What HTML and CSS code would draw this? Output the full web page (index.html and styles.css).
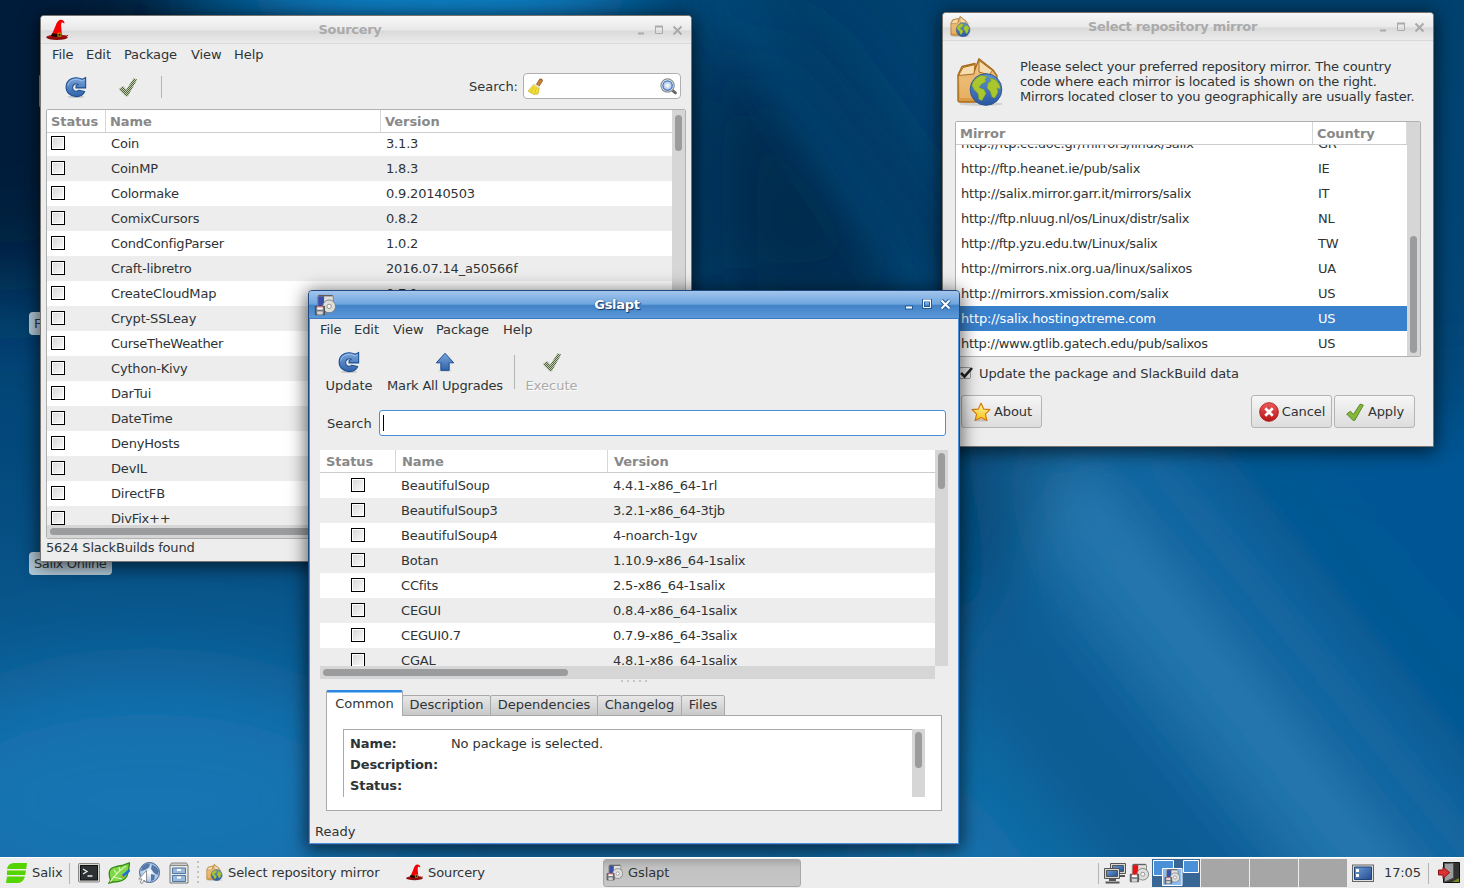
FILE: index.html
```
<!DOCTYPE html>
<html lang="en">
<head>
<meta charset="utf-8">
<title>Salix desktop</title>
<link rel="stylesheet" href="styles.css">
</head>
<body>
<svg class="defs" width="0" height="0" aria-hidden="true">
  <defs>
    <linearGradient id="gBlue" x1="0" y1="0" x2="0" y2="1"><stop offset="0" stop-color="#7ba6dc"/><stop offset="1" stop-color="#2f62a8"/></linearGradient>
    <linearGradient id="gBox" x1="0" y1="0" x2="0" y2="1"><stop offset="0" stop-color="#f3cf98"/><stop offset="1" stop-color="#d8983f"/></linearGradient>
    <linearGradient id="gGlobe" x1="0" y1="0" x2="0" y2="1"><stop offset="0" stop-color="#5d93d6"/><stop offset="1" stop-color="#2a57a0"/></linearGradient>
    <linearGradient id="gStar" x1="0" y1="0" x2="0" y2="1"><stop offset="0" stop-color="#fff9a8"/><stop offset="1" stop-color="#fcc010"/></linearGradient>
    <linearGradient id="gRed" x1="0" y1="0" x2="0" y2="1"><stop offset="0" stop-color="#ee5a5a"/><stop offset="1" stop-color="#b81515"/></linearGradient>
    <linearGradient id="gScreen" x1="0" y1="0" x2="1" y2="1"><stop offset="0" stop-color="#6f9bd6"/><stop offset="1" stop-color="#234d90"/></linearGradient>
    <radialGradient id="gPale"><stop offset="0" stop-color="#fff"/><stop offset="1" stop-color="#9ebde4"/></radialGradient>
    <pattern id="pCheck" width="2.180" height="2.180" patternUnits="userSpaceOnUse"><rect width="2.180" height="2.180" fill="#c3ccb6"/><path d="M0 0h1.090v1.090H0zM1.090 1.090h1.090v1.090H1.090z" fill="#4e6337"/></pattern>
    <symbol id="hat" viewBox="0 0 22 22">
      <ellipse cx="11" cy="18.300" rx="10.800" ry="2.700" fill="#8c0b0b"/><path d="M1 18q10-3 20-1l1-1" stroke="#b81818" fill="none"/>
      <path d="M5 17.500 9.500 7Q11.500 1 14.500.8q4 .2 4 3.700L15.800 3.200l-.8 2.500L16 17.500q-5 1.500-11 0z" fill="#f40000"/>
      <path d="M6 14.300q5 1 9.600 0l.6 3q-5 1.500-11.200 0z" fill="#1c0a00"/><rect x="12" y="14.200" width="3" height="3" fill="none" stroke="#c89a00"/>
    </symbol>
    <symbol id="refresh" viewBox="0 0 24 24">
      <ellipse cx="12" cy="22.800" rx="9" ry="1.200" fill="#000" opacity=".15"/>
      <path d="M22.500 1.500v11.500h-10.500v-2.500l2.500-1.500C11.500 7.500 8.300 9.500 8.300 12.800c0 3.700 4.200 5 6.700 2.700l6.500 1.500C20 20.500 16.500 22.500 12.500 22.500 6 22.500 1.200 18 1.200 12 1.200 3.500 10.500-.5 19 3.500z" fill="url(#gBlue)" stroke="#1f4f93" stroke-width="1.200" stroke-linejoin="round"/>
      <path d="M3 10.500C4.500 3.700 12 2 18.500 5.500l2.500-1.500" fill="none" stroke="#a8c6ec" stroke-width=".9"/>
    </symbol>
    <symbol id="tick" viewBox="0 0 24 24"><path d="M2 14.500 6.500 11l3.500 4L18.200 2.500 22 3.800 11.800 22H9.500z" stroke-linejoin="round"/></symbol>
    <symbol id="up" viewBox="0 0 24 24"><ellipse cx="12" cy="22.500" rx="8" ry="1.200" opacity=".12"/><path d="M12 1.500 22.500 13H17v9H7v-9H1.500z" fill="url(#gBlue)" stroke="#1f4f93" stroke-width="1.200" stroke-linejoin="round"/></symbol>
    <symbol id="box" viewBox="0 0 48 48">
      <ellipse cx="25" cy="46" rx="22" ry="1.800" opacity=".12"/>
      <path d="M2 17 6 8.500 19 5.500 18 14 23 .8 37 12l4 6-1 24q0 2-3 2H4q-2 0-2-2z" fill="url(#gBox)" stroke="#a66a19" stroke-width="1.400" stroke-linejoin="round"/>
      <path d="M2.500 17.500 7 9.500l12-3-1 9.500zM23 2.500l13.500 10L33 17l-10-3z" fill="#f6dcae" stroke="#a66a19"/>
      <path d="M4 20h14v20H4z" fill="#eebe75" opacity=".6"/>
      <circle cx="30" cy="31.500" r="15.800" fill="url(#gGlobe)" stroke="#2d5591"/>
      <path d="M17 24q3-5 8-6.500l6 1-2 3 1 2-5 3-2 3 5 2 2 4-4 7-3-1-1-6-4-4-2-4zM34 20l6 2 4 6 0 3-3-1 1 4-3 6-3-1-2-6-3-3 1-5 3-2z" fill="#a9c72c" stroke="#7c9b22" stroke-width=".6"/>
    </symbol>
    <symbol id="disk" viewBox="0 0 24 24">
      <rect x="4" y="1.500" width="17" height="17" rx="1.500" fill="#e0e0dc" stroke="#777"/><rect x="4.500" y="2.500" width="6.500" height="12" fill="currentColor"/><path d="M5 2h15" stroke="#444"/>
      <circle cx="16.500" cy="13.500" r="7" fill="#dededb" stroke="#777"/><circle cx="16.500" cy="13.500" r="2.400" fill="#f8f8f8" stroke="#888"/>
      <path d="M1.500 13.500h10v9h-10z" fill="#777b82" stroke="#444"/><path d="M3.500 13.500h6v3.500h-6z" fill="#fff"/><path d="M3.500 14h6" stroke="#d33"/><path d="M3.500 19h6v3.500h-6z" fill="#d5d5d5"/>
    </symbol>
  </defs>
</svg>

<main class="desktop">
  <svg class="wallpaper" viewBox="0 0 1464 888" preserveAspectRatio="none" aria-hidden="true">
    <defs>
      <linearGradient id="wBase" x1="0" y1="0" x2="0" y2="1"><stop offset="0" stop-color="#00416f"/><stop offset=".5" stop-color="#03487a"/><stop offset=".8" stop-color="#0c5e96"/><stop offset="1" stop-color="#12649c"/></linearGradient>
      <linearGradient id="wStreak" gradientUnits="userSpaceOnUse" x1="960" y1="888" x2="1464" y2="480">
        <stop offset="0" stop-color="#1474b2"/><stop offset=".17" stop-color="#10689f"/><stop offset=".24" stop-color="#0b5a92"/><stop offset=".36" stop-color="#0a5c96"/><stop offset=".46" stop-color="#1f74ac"/><stop offset=".54" stop-color="#2f7fb6"/><stop offset=".58" stop-color="#0c609a"/><stop offset=".66" stop-color="#156ba6"/><stop offset=".72" stop-color="#075992"/><stop offset="1" stop-color="#005696"/>
      </linearGradient>
      <filter id="b60" filterUnits="userSpaceOnUse" x="-300" y="-300" width="2064" height="1488"><feGaussianBlur stdDeviation="50"/></filter>
      <filter id="b12" filterUnits="userSpaceOnUse" x="-300" y="-300" width="2064" height="1488"><feGaussianBlur stdDeviation="20"/></filter>
    </defs>
    <rect width="1464" height="888" fill="url(#wBase)"/>
    <g filter="url(#b60)">
      <ellipse cx="10" cy="20" rx="170" ry="280" fill="#001c3a"/>
      <ellipse cx="440" cy="-20" rx="200" ry="90" fill="#0880c4"/>
      <path d="M690 60 780 40 940 260 960 330H690z" fill="#002a4e"/>
      <ellipse cx="150" cy="800" rx="240" ry="120" fill="#1574b2"/>
      <path d="M1020 420h550v600H880V720z" fill="url(#wStreak)"/>
      <ellipse cx="985" cy="520" rx="50" ry="90" fill="#00406c"/>
    </g>
    <g filter="url(#b12)">
      <path d="M700-20h35l250 370h-45z" fill="#075085" opacity=".6"/>
    </g>
    <g filter="url(#b12)" opacity=".6">
      <path d="M1100 440h470v500H930V720z" fill="url(#wStreak)"/>
    </g>
  </svg>
  <div class="deskicon" aria-hidden="true"></div>
  <span class="desklabel desklabel-files">Files</span>
  <span class="desklabel desklabel-online">Salix Online</span>

  <section class="window win-mirror">
    <header class="titlebar">
      <svg class="i22"><use href="#box"/></svg><h1>Select repository mirror</h1>
      <svg class="winctl" viewBox="0 0 48 12"><path d="M1 9.500h6" stroke-width="2"/><path d="M18.500 2.500h7v7h-7z" stroke-width="1"/><path d="M18 2.500h8" stroke-width="2"/><path d="m36.500 2.500 8 8m0-8-8 8" stroke-width="2"/></svg>
    </header>
    <div class="intro"><svg class="i48"><use href="#box"/></svg><p>Please select your preferred repository mirror. The country<br>code where each mirror is located is shown on the right.<br>Mirrors located closer to you geographically are usually faster.</p></div>
    <div class="framed mirrors">
      <div class="list">
        <div class="row head"><span>Mirror</span><span>Country</span></div>
        <div class="rows">
          <div class="row"><span>http://ftp.cc.uoc.gr/mirrors/linux/salix</span><span>GR</span></div>
          <div class="row"><span>http://ftp.heanet.ie/pub/salix</span><span>IE</span></div>
          <div class="row"><span>http://salix.mirror.garr.it/mirrors/salix</span><span>IT</span></div>
          <div class="row tight"><span>http://ftp.nluug.nl/os/Linux/distr/salix</span><span>NL</span></div>
          <div class="row tight"><span>http://ftp.yzu.edu.tw/Linux/salix</span><span>TW</span></div>
          <div class="row"><span>http://mirrors.nix.org.ua/linux/salixos</span><span>UA</span></div>
          <div class="row loose"><span>http://mirrors.xmission.com/salix</span><span>US</span></div>
          <div class="row loose selected"><span>http://salix.hostingxtreme.com</span><span>US</span></div>
          <div class="row tight"><span>http://www.gtlib.gatech.edu/pub/salixos</span><span>US</span></div>
        </div>
      </div>
      <div class="vscroll"><i></i></div>
    </div>
    <label class="option"><svg viewBox="0 0 16 16"><rect x="1.500" y="2.500" width="11" height="11" rx="1.500" fill="#eee" stroke="#999"/><path d="m3 8 3.500 3.500L14 3" fill="none" stroke="#222" stroke-width="2.600"/></svg>Update the package and SlackBuild data</label>
    <div class="buttons">
      <button><svg class="i20" viewBox="0 0 24 24"><ellipse cx="12" cy="22" rx="9" ry="1.500" opacity=".15"/><path d="m12 1.500 3.300 7 7.500.7-5.500 5.300 1.700 7.700-7-3.700-7 3.700 1.700-7.700L1.200 9.200l7.500-.7z" fill="url(#gStar)" stroke="#d47a0a" stroke-width="1.400" stroke-linejoin="round"/></svg>About</button>
      <button class="push"><svg class="i20" viewBox="0 0 24 24"><circle cx="12" cy="12" r="11.200" fill="url(#gRed)" stroke="#a11" stroke-width="1"/><path d="m7.500 7.500 9 9m0-9-9 9" stroke="#fff" stroke-width="3.200"/></svg>Cancel</button>
      <button><svg class="i20 tick-on"><use href="#tick"/></svg>Apply</button>
    </div>
  </section>

  <section class="window win-sourcery">
    <header class="titlebar">
      <svg class="i22"><use href="#hat"/></svg><h1>Sourcery</h1>
      <svg class="winctl" viewBox="0 0 48 12"><path d="M1 9.500h6" stroke-width="2"/><path d="M18.500 2.500h7v7h-7z" stroke-width="1"/><path d="M18 2.500h8" stroke-width="2"/><path d="m36.500 2.500 8 8m0-8-8 8" stroke-width="2"/></svg>
    </header>
    <nav class="menubar"><span class="m-file">File</span><span class="m-edit">Edit</span><span class="m-pack">Package</span><span class="m-view">View</span><span>Help</span></nav>
    <div class="tools">
      <svg class="i22"><use href="#refresh"/></svg><svg class="i22 tick-off"><use href="#tick"/></svg><i class="sep"></i>
      <span class="push">Search:</span>
      <div class="searchbox">
        <svg viewBox="0 0 18 18"><path d="m9.500 7.500 4-6.500q3-.5 3 2l-4 6z" fill="#c87f35" stroke="#7a4310" stroke-width=".7"/><path d="M7.500 6.500 13 10l-1.500 7-4 .5L1.200 14z" fill="#f3dd3a" stroke="#c7a90e" stroke-width=".7"/><path d="m8 9-4 6m6-5-2 6" stroke="#c9ad18" stroke-width=".6"/><path d="m7.500 6.500 5.500 3.300" stroke="#e8e4d8" stroke-width="1.700"/></svg>
        <svg viewBox="0 0 18 18"><path d="m13 13 3.300 2.800" stroke="#666" stroke-width="3" stroke-linecap="round"/><circle cx="8" cy="8" r="7" fill="#fff" stroke="#8b8d8f" stroke-width="1.300"/><circle cx="8" cy="8" r="5" fill="url(#gPale)" stroke="#3b73b9" stroke-width="1.300"/></svg>
      </div>
    </div>
    <div class="framed packages">
      <div class="list">
        <div class="row head"><span>Status</span><span>Name</span><span>Version</span></div>
        <div class="rows">
          <div class="row"><i></i><span>Coin</span><span>3.1.3</span></div>
          <div class="row"><i></i><span>CoinMP</span><span>1.8.3</span></div>
          <div class="row"><i></i><span>Colormake</span><span>0.9.20140503</span></div>
          <div class="row"><i></i><span>ComixCursors</span><span>0.8.2</span></div>
          <div class="row"><i></i><span>CondConfigParser</span><span>1.0.2</span></div>
          <div class="row"><i></i><span>Craft-libretro</span><span>2016.07.14_a50566f</span></div>
          <div class="row"><i></i><span>CreateCloudMap</span><span>0.7.1</span></div>
          <div class="row"><i></i><span>Crypt-SSLeay</span><span></span></div>
          <div class="row tight"><i></i><span>CurseTheWeather</span><span></span></div>
          <div class="row"><i></i><span>Cython-Kivy</span><span></span></div>
          <div class="row"><i></i><span>DarTui</span><span></span></div>
          <div class="row"><i></i><span>DateTime</span><span></span></div>
          <div class="row"><i></i><span>DenyHosts</span><span></span></div>
          <div class="row"><i></i><span>DevIL</span><span></span></div>
          <div class="row"><i></i><span>DirectFB</span><span></span></div>
          <div class="row"><i></i><span>DivFix++</span><span></span></div>
        </div>
        <div class="hscroll"><i></i></div>
      </div>
      <div class="vscroll"><i></i></div>
    </div>
    <footer>5624 SlackBuilds found</footer>
  </section>

  <section class="window active win-gslapt">
    <header class="titlebar">
      <svg class="i22 disk-blue"><use href="#disk"/></svg><h1>Gslapt</h1>
      <svg class="winctl" viewBox="0 0 48 12"><g class="ctl-edge"><path d="M0 9.500h8" stroke-width="4"/><path d="M18.500 2.500h7v7h-7z" stroke-width="3"/><path d="m36.500 2.500 8 8m0-8-8 8" stroke-width="4"/></g><path d="M1 9.500h6" stroke-width="2"/><path d="M18.500 2.500h7v7h-7z" stroke-width="1"/><path d="M18 2.500h8" stroke-width="2"/><path d="m36.500 2.500 8 8m0-8-8 8" stroke-width="2"/></svg>
    </header>
    <nav class="menubar"><span class="m-file">File</span><span class="m-edit">Edit</span><span class="m-view">View</span><span class="m-pack">Package</span><span>Help</span></nav>
    <div class="bigtools">
      <div class="tool"><svg class="i22"><use href="#refresh"/></svg><span>Update</span></div>
      <div class="tool tool-mark"><svg class="i20"><use href="#up"/></svg><span>Mark All Upgrades</span></div>
      <i class="sep"></i>
      <div class="tool off"><svg class="i22 tick-off"><use href="#tick"/></svg><span>Execute</span></div>
    </div>
    <div class="query"><span>Search</span><div class="entry"><i></i></div></div>
    <div class="results">
      <div class="list">
        <div class="row head"><span>Status</span><span>Name</span><span>Version</span></div>
        <div class="rows">
          <div class="row"><i></i><span>BeautifulSoup</span><span>4.4.1-x86_64-1rl</span></div>
          <div class="row"><i></i><span>BeautifulSoup3</span><span>3.2.1-x86_64-3tjb</span></div>
          <div class="row"><i></i><span>BeautifulSoup4</span><span>4-noarch-1gv</span></div>
          <div class="row"><i></i><span>Botan</span><span>1.10.9-x86_64-1salix</span></div>
          <div class="row"><i></i><span>CCfits</span><span>2.5-x86_64-1salix</span></div>
          <div class="row"><i></i><span>CEGUI</span><span>0.8.4-x86_64-1salix</span></div>
          <div class="row"><i></i><span>CEGUI0.7</span><span>0.7.9-x86_64-3salix</span></div>
          <div class="row"><i></i><span>CGAL</span><span>4.8.1-x86_64-1salix</span></div>
        </div>
      </div>
      <div class="vscroll"><i></i></div>
      <div class="hscroll"><i></i></div>
    </div>
    <div class="grip"><i></i><i></i><i></i><i></i><i></i></div>
    <div class="tabs"><span class="current">Common</span><span class="t-desc">Description</span><span class="t-deps">Dependencies</span><span class="t-log">Changelog</span><span class="t-files">Files</span></div>
    <div class="page">
      <dl><dt>Name:</dt><dd>No package is selected.</dd><dt>Description:</dt><dd></dd><dt>Status:</dt><dd></dd></dl>
      <div class="vscroll"><i></i></div>
    </div>
    <footer>Ready</footer>
  </section>
</main>

<div class="panel">
  <svg class="logo" viewBox="0 0 21 20"><path d="M1 6Q2 0 8 0h13l-.8 6zM1 7.500h19l-.7 4.500H1zM1 13.500h18Q17 20 12 20H0z" fill="#54d403"/></svg>
  <span class="menu-name">Salix</span><i class="sep"></i>
  <svg class="i22 launch" viewBox="0 0 22 22"><rect x=".5" y="1.500" width="21" height="18.500" rx="1" fill="#d6d6d1" stroke="#888"/><rect x="2.500" y="3.500" width="17" height="14.500" fill="#2c3133" stroke="#111"/><path d="m5 7 4 2.500L5 12M9.500 14h5" fill="none" stroke="#eee" stroke-width="1.300"/></svg>
  <svg class="i22 launch" viewBox="0 0 22 22"><path d="M1 21 2.500 18Q-1 8 5 5.500 10 4 14 3.500 18 2 21.500.8 21 8 19 14q-3 6-14 6z" fill="#7fd64a" stroke="#338a11" stroke-width="1.300"/><path d="M2 20Q9 10 18 4M6 8l3 4m2-7 1 4M5 15l9 2" fill="none" stroke="#d9f7b8" stroke-width="1.200"/><path d="m13 16 1-3 7-6 1.500 2-7 6z" fill="#1e6ee0"/><path d="m13 16 1-3 1.500 2z" fill="#eca52d"/></svg>
  <svg class="i22 launch" viewBox="0 0 22 22"><circle cx="11.500" cy="10.500" r="10" fill="url(#gPale)" stroke="#44648f"/><path d="m4 4.500 4-2.700 4-.3-1 4-4 2.500-4 1zM14 2.500l4.500 2.800L21 9l-1.500 4-3.500-2-3-4zM13 12l4 1-1 5-3 1z" fill="#5478a8"/><path d="M8.500 8.500v12L6 18l-1.800 3.500-2-1L4 17H.8z" fill="#fff" stroke="#777" stroke-width=".8"/></svg>
  <svg class="i22 launch" viewBox="0 0 22 22"><path d="M2 3.500h18v17.500H2z" fill="#e8e8e5" stroke="#777"/><path d="m2 3.500 1.500-2.500h15l1.500 2.500z" fill="#ccc" stroke="#888"/><path d="M4.500 6h13v5.500h-13zM4.500 13.500h13v6h-13z" fill="#9ab8da" stroke="#5378a3"/><path d="M9 8h4M9 15.500h4" stroke="#fff" stroke-width="2"/></svg>
  <i class="dots"></i>
  <div class="task"><svg class="i16"><use href="#box"/></svg>Select repository mirror</div>
  <div class="task task-hat"><svg class="i16"><use href="#hat"/></svg>Sourcery</div>
  <div class="task pressed"><svg class="i16 disk-blue"><use href="#disk"/></svg>Gslapt</div>
  <i class="sep push"></i>
  <svg class="net" viewBox="0 0 22 22"><g stroke="#555"><path d="M6.500 1.500h15v10h-15z" fill="#d8d8d4"/><path d="M8.500 3.500h11v6h-11z" fill="url(#gScreen)"/><path d="M12 14h9" stroke-width="2"/><path d="M.5 6.500h15v10h-15z" fill="#d8d8d4"/><path d="M2.500 8.500h11v6h-11z" fill="url(#gScreen)"/><path d="M5 18h7M1.500 20.500h14" stroke-width="2"/></g></svg>
  <svg class="i20 disk-red"><use href="#disk"/></svg>
  <div class="pager">
    <svg class="here" viewBox="0 0 48 28"><path d="M0 0h48v28H0z" fill="#386695"/><path d="M1.500 1.500h20v15h-20zM31.500 1.500h15v12h-15z" fill="#4a90d9" stroke="#fff"/><path d="M10.500 9.500h19.500v17H10.500z" fill="#8cbcf2" stroke="#fff"/><svg x="12" y="9.500" width="16" height="16" class="disk-blue"><use href="#disk"/></svg></svg>
    <i></i><i></i><i></i>
  </div>
  <svg class="i22 show" viewBox="0 0 22 22"><rect x=".5" y="3" width="21" height="16.500" fill="#e0e0dc" stroke="#666"/><path d="M2.500 5h17v12.500h-17z" fill="url(#gScreen)" stroke="#1f4375"/><path d="M4 7h3v3H4zM4 12h3v3H4z" fill="#fff"/></svg>
  <time>17:05</time><i class="sep"></i>
  <svg class="i22 quit" viewBox="0 0 22 22"><path d="M5.500.5h16v20h-16z" fill="#333" stroke="#111"/><path d="M14 20 21 16v4z" fill="#7a8a20"/><path d="m6.500 1.500 9-.5v15l-9 4z" fill="#aaa" stroke="#555" opacity=".9"/><path d="M.5 8h4.500V5l6.500 5.500L5 16.500v-3.500H.5z" fill="#dd3333" stroke="#8b1010"/></svg>
</div>
</body>
</html>
```
FILE: styles.css
```
* { box-sizing: border-box; }
body { margin: 0; width: 1464px; height: 888px; overflow: hidden; font: 13px/15px "DejaVu Sans", sans-serif; color: #2e3436; background: #03487a; }
.defs { position: absolute; }
svg { display: block; flex: none; }
.desktop { position: relative; height: 857px; overflow: hidden; }
.wallpaper { position: absolute; left: 0; top: 0; width: 1464px; height: 888px; }
.push { margin-left: auto; }
.i16 { width: 17px; height: 17px; }
.i20 { width: 20px; height: 20px; }
.i22 { width: 22px; height: 22px; }
.i48 { width: 48px; height: 48px; }
.disk-blue { color: #3a50a8; }
.disk-red { color: #ee1111; }
.tick-on { fill: #83b83a; stroke: #4a7a14; }
.tick-off { fill: url(#pCheck); stroke: none; }
.sep { flex: none; width: 1px; background: #b4b4b4; }

.deskicon { position: absolute; left: 39px; top: 74px; width: 20px; height: 34px; border-radius: 3px; background: #7890a4; }
.desklabel { position: absolute; left: 29px; width: 83px; height: 23px; padding: 4px 5px; border-radius: 4px; background: #b4cad8; letter-spacing: -.4px; white-space: nowrap; }
.desklabel-files { top: 312px; }
.desklabel-online { top: 552px; }

.window { position: absolute; display: flex; flex-direction: column; border: 1px solid #77736f; border-radius: 4px 4px 0 0; background: #ededed; box-shadow: 0 3px 18px 2px rgba(0, 0, 0, .6); }
.win-mirror { left: 942px; top: 12px; width: 492px; height: 435px; }
.win-sourcery { left: 40px; top: 15px; width: 652px; height: 547px; }
.win-gslapt { left: 308px; top: 290px; width: 652px; height: 555px; border-color: #1e4a80; }
.titlebar { display: flex; align-items: center; flex: none; height: 28px; padding: 0 6px 0 5px; border-radius: 3px 3px 0 0; border-bottom: 1px solid #d9d9d9; background: linear-gradient(#f8f8f8, #e9e9e9 50%, #dadada 56%, #ebebeb); }
.titlebar h1 { flex: 1; margin: 0; padding-right: 5px; text-align: center; font-size: 13px; line-height: 15px; color: #aaa; letter-spacing: -.3px; }
.win-mirror .titlebar h1 { padding-right: 4px; }
.win-mirror .titlebar .i22 { width: 21px; height: 21px; margin: 0 -1px 0 2px; }
.win-gslapt .titlebar h1 { padding-right: 7px; }
.winctl { width: 48px; height: 12px; fill: none; stroke: #aaa; }
.win-gslapt .winctl { margin-top: -1px; }
.menubar { display: flex; flex: none; height: 21px; padding: 3px 11px; }
.menubar span { letter-spacing: -.05px; }
.m-file { width: 34px; }
.m-edit { width: 38px; }
.menubar .m-pack { width: 67px; letter-spacing: -.15px; }
.m-view { width: 43px; }
.win-gslapt .m-edit { width: 39px; }

.framed { display: flex; border: 1px solid #b0b2b2; border-radius: 2px; background: #fff; overflow: hidden; }
.list { display: flex; flex-direction: column; flex: 1; min-width: 0; background: #fff; }
.row { display: grid; align-items: center; flex: none; height: 25px; white-space: nowrap; letter-spacing: -.18px; }
.row i { width: 14px; height: 14px; margin-top: -2px; border: 1px solid #000; background: linear-gradient(135deg, #dcdcdc 15%, #fafafa); box-shadow: inset 0 0 0 1px #fff; }
.head { height: 23px; border-bottom: 1px solid #ccc; font-weight: bold; color: #888; letter-spacing: -.05px; }
.head span { height: 22px; padding-top: 4px; }
.head span + span { border-left: 1px solid #d8d8d8; }
.rows { flex: 1; min-height: 0; display: flex; flex-direction: column; overflow: hidden; }
.vscroll { flex: none; width: 13px; padding: 3px; background: #d6d6d6; }
.hscroll { flex: none; height: 13px; padding: 3px; background: #d6d6d6; }
.vscroll i, .hscroll i { display: block; width: 7px; height: 36px; border-radius: 4px; background: #9b9c9d; }
.hscroll i { width: 245px; height: 7px; }

.intro { display: flex; gap: 16px; height: 80px; margin-left: 13px; padding-top: 17px; }
.intro p { margin: 1px 0 0; letter-spacing: -.175px; white-space: nowrap; }
.mirrors { margin: 0 12px; height: 236px; }
.mirrors .row { grid-template-columns: 357px 1fr; padding-left: 5px; letter-spacing: -.23px; }
.mirrors .tight span:first-child { letter-spacing: -.3px; }
.mirrors .loose span:first-child { letter-spacing: -.18px; }
.mirrors .head { padding-left: 4px; height: 23px; grid-template-columns: 352px 1fr; letter-spacing: -.05px; }
.mirrors .head span + span { padding-left: 4px; border-right: 1px solid #ddd; }
.mirrors .rows { justify-content: flex-end; }
.mirrors .vscroll i { margin-top: 111px; height: 117px; }
.selected { color: #fff; }
.option { display: flex; align-items: center; gap: 5px; height: 32px; margin-left: 15px; letter-spacing: -.13px; }
.option svg { width: 16px; height: 16px; }
.buttons { display: flex; gap: 2px; margin: 6px 18px 0; }
.buttons button { display: flex; align-items: center; justify-content: center; gap: 3px; width: 81px; height: 33px; padding: 0; border: 1px solid #b4b4b4; border-radius: 3px; background: linear-gradient(#f6f6f6, #ddd); color: inherit; font: inherit; letter-spacing: -.1px; }
.buttons .push { padding-left: 1px; }

.tools { display: flex; align-items: center; height: 44px; padding: 0 10px 1px 24px; }
.tools .tick-off { margin-left: 30px; width: 22px; }
.tools .sep { height: 22px; margin-left: 22px; }
.searchbox { display: flex; align-items: center; justify-content: space-between; width: 158px; height: 26px; margin-left: 5px; padding: 0 3px; border: 1px solid #b0b0b0; border-radius: 4px; background: #fff; }
.searchbox svg { width: 17px; height: 17px; }
.tools .push, .searchbox { margin-top: -1px; }
.packages { height: 430px; margin: 0 5px; }
.packages .row { grid-template-columns: 60px 275px 1fr; padding-left: 4px; }
.packages .tight { letter-spacing: -.28px; }
.packages .head { grid-template-columns: 54px 275px 1fr; }
.packages .head span + span { padding-left: 4px; }
.rows .row:nth-child(even) { background: #ededed; }
.mirrors .rows .row { background: #fff; }
.mirrors .rows .selected { background: #3981cc; }
.packages .rows .row:first-child { margin-top: -2px; }
.packages .vscroll { padding-top: 5px; }
.packages .hscroll i { width: 600px; }
.win-sourcery footer { padding: 1px 5px; letter-spacing: -.18px; }

.active { background: #ededed; box-shadow: inset 0 0 0 1px #4a90d9, 0 3px 18px 2px rgba(0, 0, 0, .6); }
.active .titlebar { border-bottom-color: #3a7bc4; background: linear-gradient(#a3c5ec, #6fa6df 48%, #4282c6 54%, #5b98d9); }
.active h1 { color: #fff; text-shadow: 0 0 1px #173c66, 1px 1px 1px #173c66; }
.active .winctl { stroke: #fff; }
.ctl-edge { stroke: #245c9a; }
.bigtools { display: flex; flex: none; height: 70px; padding: 11px 17px; }
.tool { display: flex; flex-direction: column; align-items: center; white-space: nowrap; width: 46px; }
.tool svg { height: 22px; }
.tool span { margin-top: 5px; }
.tool-mark { width: 116px; margin-left: 15px; letter-spacing: -.17px; }
.bigtools .sep { height: 34px; margin: 4px 11px 0 11px; }
.off { width: 51px; color: #aaa; text-shadow: 1px 1px #fff; }
.query { display: flex; flex: none; align-items: center; justify-content: space-between; height: 26px; margin: 0 13px 14px 18px; }
.entry { display: flex; align-items: center; width: 567px; height: 26px; border: 1px solid #4a90d9; border-radius: 3px; background: #fff; padding-left: 3px; }
.entry i { width: 1px; height: 16px; background: #000; }
.results { display: grid; flex: none; grid-template-columns: 615px 13px; grid-template-rows: 216px 13px; margin-left: 11px; }
.results .list { overflow: hidden; }
.results .row { grid-template-columns: 50px 212px 1fr; padding-left: 31px; }
.results .head { grid-template-columns: 69px 212px 1fr; padding-left: 6px; }
.results .head span + span { padding-left: 6px; }
.grip { display: flex; flex: none; justify-content: center; gap: 4px; height: 11px; padding-top: 1px; }
.grip i { width: 2px; height: 2px; background: #c6c6c6; }
.tabs { display: flex; flex: none; align-items: flex-end; height: 26px; margin-left: 17px; position: relative; z-index: 1; }
.tabs span { height: 21px; margin-right: -1px; padding-top: 1px; border: 1px solid #a8aaaa; border-radius: 2px 2px 0 0; background: linear-gradient(#e8e8e8, #c8c8c8); text-align: center; }
.tabs .current { width: 77px; height: 26px; padding-top: 4px; margin-right: 0; border-top: 2px solid #2a86e0; border-bottom: 0; background: linear-gradient(#8ec4f5 0 1px, #fff 1px); }
.t-desc { width: 89px; margin-left: -1px; }
.t-deps { width: 108px; }
.t-log { width: 85px; }
.t-files { width: 44px; }
.page { display: flex; flex: none; width: 616px; height: 96px; margin: -1px 0 0 17px; padding: 13px 16px; border: 1px solid #a8aaaa; background: #fff; }
dl { display: grid; grid-template-columns: 101px 1fr; grid-template-rows: 21px 21px 21px; flex: 1; height: 68px; margin: 0; padding: 3px 0 0 6px; border: solid #aaa; border-width: 1px 0 0 1px; line-height: 21px; letter-spacing: -.1px; }
dt { font-weight: bold; }
dd { margin: 0; }
.page .vscroll { height: 68px; }
.win-gslapt footer { padding: 13px 6px; }

.panel { display: flex; align-items: center; height: 31px; padding-left: 6px; background: #ededed; border-top: 1px solid #fff; white-space: nowrap; letter-spacing: -.1px; }
.logo { width: 21px; height: 20px; }
.panel .sep { height: 21px; }
.menu-name { width: 37px; margin: -1px 0 0 5px; }
.launch { margin-left: 8px; }
.dots { width: 2px; height: 24px; margin: 0 7px 0 7px; background: repeating-linear-gradient(#c2c2c2 0 2px, transparent 2px 5px); }
.task { display: flex; align-items: center; gap: 5px; width: 199px; height: 28px; padding-bottom: 1px; }
.task-hat { padding-left: 1px; }
.pressed { width: 198px; margin-left: -1px; padding-left: 2px; border: 1px solid #a8a8a8; border-radius: 3px; background: linear-gradient(#a8a8a8, #c2c2c2 30%, #c6c6c6); }
.net { width: 22px; height: 22px; margin: 0 3px 0 5px; }
.pager { display: flex; gap: 1px; margin-left: 3px; }
.pager > i, .here { width: 48px; height: 28px; background: #a6a6a6; }
.show { margin-left: 5px; }
.panel time { width: 43px; margin: -1px 0 0 10px; }
.panel time + .sep { margin-left: 1px; }
.quit { margin: 0 4px 0 9px; }
```
